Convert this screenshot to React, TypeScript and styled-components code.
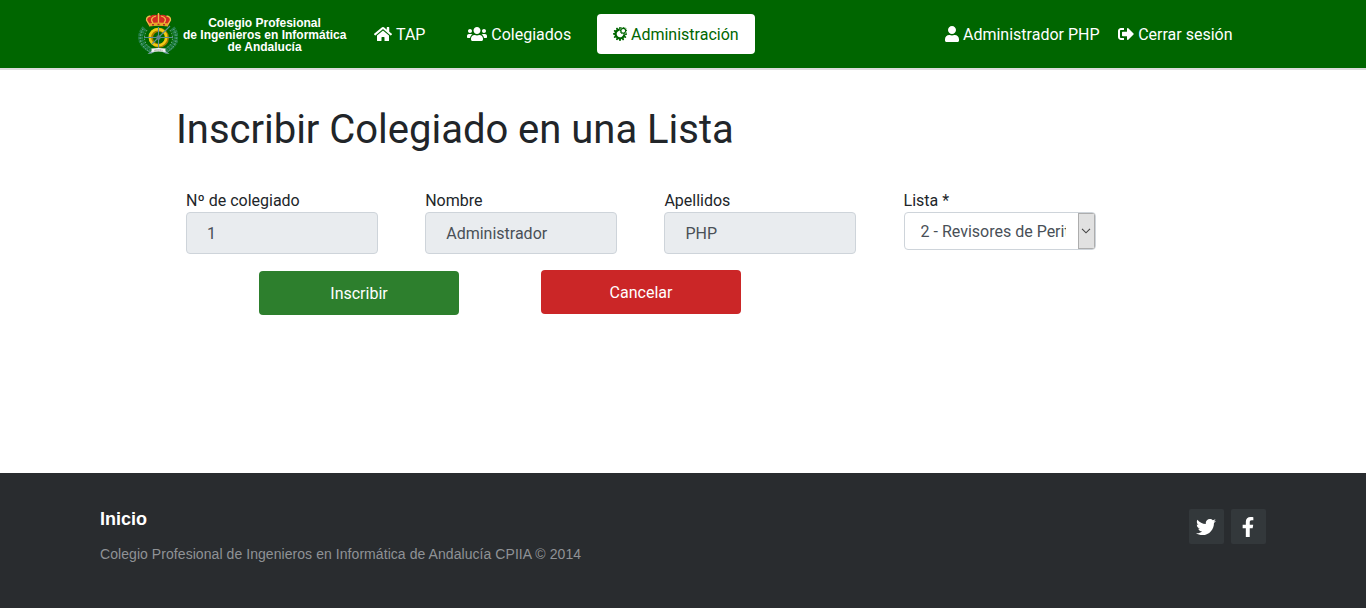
import React from "react";
import styled, { createGlobalStyle } from "styled-components";
import { FaHome, FaUsers, FaWhmcs, FaUser, FaSignOutAlt, FaTwitter, FaFacebookF } from "react-icons/fa";

const GlobalStyle = createGlobalStyle`
  *, *::before, *::after { box-sizing: border-box; }
  body {
    margin: 0;
    background: #fff;
    color: #212529;
    font: 400 16px/1.5 Roboto, "Liberation Sans", sans-serif;
  }
`;

const Page = styled.div`
  display: flex;
  flex-direction: column;
  height: 608px;
  overflow: hidden;
`;

const Header = styled.header`
  display: flex;
  align-items: center;
  flex: none;
  height: 70px;
  padding: 0 125.500px 0 138px;
  background: #006600;
  border-bottom: 2px solid #dcdcdc;
`;

const Brand = styled.a`
  display: flex;
  align-items: center;
  width: 208px;
  margin-right: 12px;
  color: #fff;
`;

const BrandText = styled.span`
  flex: none;
  width: 163px;
  margin: 2px 0 0 5px;
  font: 700 12px/12px "Liberation Sans", Arial, sans-serif;
  text-align: center;
  white-space: nowrap;
`;

const Nav = styled.nav<{ $gap: number }>`
  display: flex;
  gap: ${(p) => p.$gap}px;
`;

const NavLink = styled.a<{ $active?: boolean; $pad?: number }>`
  display: flex;
  align-items: center;
  gap: 4px;
  height: 40px;
  padding: 0 ${(p) => p.$pad ?? 16}px;
  border-radius: 4px;
  background: ${(p) => (p.$active ? "#fff" : "transparent")};
  color: ${(p) => (p.$active ? "#006600" : "#fff")};
  white-space: nowrap;
`;

const NavIcon = styled.span<{ $width: number }>`
  display: flex;
  justify-content: center;
  width: ${(p) => p.$width}px;
  svg { flex: none; width: ${(p) => p.$width}px; height: 16px; }
`;

const NavText = styled.span`
  padding-top: 2px;
`;

const Spacer = styled.div`
  flex: 1;
`;

const Main = styled.main`
  flex: 1;
  padding: 36px 176px 0;
`;

const Title = styled.h1`
  margin: 0;
  font-size: 40px;
  font-weight: 400;
  line-height: 48px;
  letter-spacing: -0.02px;
`;

const Fields = styled.div`
  display: grid;
  grid-template-columns: repeat(4, 239.2px);
  margin: 35px 0 0 10px;
`;

const Field = styled.label`
  display: flex;
  flex-direction: column;
  width: 192px;
  line-height: 24px;
`;

const Caption = styled.span`
  height: 23px;
`;

const Input = styled.input`
  width: 192px;
  height: 42px;
  padding: 0 20px;
  border: 1px solid #ced4da;
  border-radius: 4px;
  background: #e9ecef;
  color: #495057;
  font: inherit;
`;

const Select = styled.div`
  display: flex;
  width: 192px;
  height: 38px;
  border: 1px solid #ced4da;
  border-radius: 4px;
  background: #fff;
  color: #495057;
  overflow: hidden;
`;

const SelectValue = styled.span`
  flex: none;
  width: 145px;
  margin: 0 12px 0 16px;
  line-height: 38px;
  white-space: nowrap;
  overflow: hidden;
`;

const SelectArrow = styled.span`
  display: flex;
  align-items: center;
  justify-content: center;
  flex: 1;
  border: 1px solid #adadad;
  background: #e1e1e1;
`;

const Actions = styled.div`
  display: flex;
  gap: 82px;
  margin: 16px 0 0 83px;
`;

const Button = styled.button<{ $color: string; $drop?: number }>`
  width: 200px;
  height: 44px;
  margin: ${(p) => p.$drop ?? 0}px 0 0;
  padding: 2px 0 0;
  border: 0;
  border-radius: 4px;
  background: ${(p) => p.$color};
  color: #fff;
  font: inherit;
`;

const Footer = styled.footer`
  display: flex;
  justify-content: space-between;
  flex: none;
  height: 135px;
  padding: 36px 100px 0;
  background: #292c2f;
  font-family: "Liberation Sans", Arial, sans-serif;
`;

const FooterTitle = styled.p`
  margin: 0;
  color: #fff;
  font-size: 18px;
  font-weight: 700;
  line-height: 20px;
`;

const FooterNote = styled.p`
  margin: 15px 0 0;
  color: #8f9296;
  font-size: 14px;
  line-height: 21px;
  letter-spacing: 0.062px;
`;

const Social = styled.div`
  display: flex;
  gap: 7px;
`;

const SocialLink = styled.a`
  display: flex;
  align-items: center;
  justify-content: center;
  width: 35px;
  height: 35px;
  padding-right: 1px;
  border-radius: 2px;
  background: #33383b;
  color: #fff;
  font-size: 20px;
`;

const Crest = () => (
  <svg width="40" height="42" viewBox="0 0 40 42" style={{ flex: "none" }}>
    <g fill="none" stroke="#23804a" strokeWidth="5" strokeDasharray="2.6 .6">
      <path d="M6.500 15C-.5 23 2 32 13 37.500" />
      <path d="M34.500 15C41 23 39 32 28 37.500" />
    </g>
    <g fill="none" stroke="#6fae8c" strokeWidth=".9" strokeDasharray="1.6 1.4">
      <path d="M5 16C-1 25 3 34 12 39" />
      <path d="M35.500 16C41 25 38 34 29 39" />
      <path d="M9 17C4 25 7 32 13 35M32 17C37 25 34 32 28 35" />
    </g>
    <circle cx="21" cy="24.800" r="8" fill="none" stroke="#a87b00" strokeWidth="4" />
    <circle cx="20" cy="24.300" r="8.200" fill="none" stroke="#f2cb14" strokeWidth="2.600" />
    <path d="M6 24.500h29M20.500 14v22M14 31 32 13" stroke="#5d8f96" strokeWidth="1.100" />
    <circle cx="20.500" cy="24.500" r="2.200" fill="#5d858c" />
    <path d="M11 13 8 7q0-4 4.500-4Q15 1 19 2l1.500-2L22 2q4-1 6.500 1Q33 3 33 7l-3 6q-9.500-2-19 0Z" fill="#d42c22" />
    <path
      d="m11.500 12-3-5q0-3.500 4-4M29.500 12l3-5q0-3.500-4-4M15 10q-4-5 3-7M26 10q4-5-3-7M20.500 0v10"
      fill="none"
      stroke="#ecc04a"
      strokeWidth="1.300"
    />
    <path d="M11 10.500q9.500-2 19 0v3q-9.500-1.500-19 0Z" fill="#e9a92a" />
    <path d="M14 11.800h2m3.500-.4h2m3.500 .4h2" stroke="#b72b2b" strokeWidth="1.400" />
    <path d="m14.500 37-5 4 4-.5 3-1.500m10-2 5 4-4-.5-3-1.500" fill="#86a9b4" />
    <path d="M13.500 35.500q7-1 14 0v3.500q-7-1-14 0Z" fill="#f4f4f4" />
    <path d="M16.500 37.300q4-.6 8 0" fill="none" stroke="#666" strokeWidth=".9" strokeDasharray="1.200 .7" />
  </svg>
);

export default function App() {
  return (
    <Page>
      <GlobalStyle />
      <Header>
        <Brand>
          <Crest />
          <BrandText>
            Colegio Profesional
            <br />
            de Ingenieros en Informática
            <br />
            de Andalucía
          </BrandText>
        </Brand>
        <Nav $gap={9.8}>
          <NavLink>
            <NavIcon $width={18}><FaHome /></NavIcon>
            <NavText>TAP</NavText>
          </NavLink>
          <NavLink>
            <NavIcon $width={20}><FaUsers /></NavIcon>
            <NavText>Colegiados</NavText>
          </NavLink>
          <NavLink $active>
            <NavIcon $width={14}><FaWhmcs /></NavIcon>
            <NavText>Administración</NavText>
          </NavLink>
        </Nav>
        <Spacer />
        <Nav $gap={2.6}>
          <NavLink $pad={8}>
            <NavIcon $width={14}><FaUser /></NavIcon>
            <NavText>Administrador PHP</NavText>
          </NavLink>
          <NavLink $pad={8}>
            <NavIcon $width={16}><FaSignOutAlt /></NavIcon>
            <NavText>Cerrar sesión</NavText>
          </NavLink>
        </Nav>
      </Header>
      <Main>
        <Title>Inscribir Colegiado en una Lista</Title>
        <Fields>
          <Field><Caption>Nº de colegiado</Caption><Input disabled value="1" /></Field>
          <Field><Caption>Nombre</Caption><Input disabled value="Administrador" /></Field>
          <Field><Caption>Apellidos</Caption><Input disabled value="PHP" /></Field>
          <Field as="div">
            <Caption>Lista *</Caption>
            <Select>
              <SelectValue>2 - Revisores de Peritajes</SelectValue>
              <SelectArrow>
                <svg width="10" height="6" viewBox="0 0 10 6" fill="none" stroke="#444" strokeWidth="1.1">
                  <path d="m1 .8 4 4 4-4" />
                </svg>
              </SelectArrow>
            </Select>
          </Field>
        </Fields>
        <Actions>
          <Button $color="#2d7f2d" $drop={1}>Inscribir</Button>
          <Button $color="#cb2627">Cancelar</Button>
        </Actions>
      </Main>
      <Footer>
        <div>
          <FooterTitle>Inicio</FooterTitle>
          <FooterNote>Colegio Profesional de Ingenieros en Informática de Andalucía CPIIA © 2014</FooterNote>
        </div>
        <Social>
          <SocialLink><FaTwitter /></SocialLink>
          <SocialLink><FaFacebookF /></SocialLink>
        </Social>
      </Footer>
    </Page>
  );
}
